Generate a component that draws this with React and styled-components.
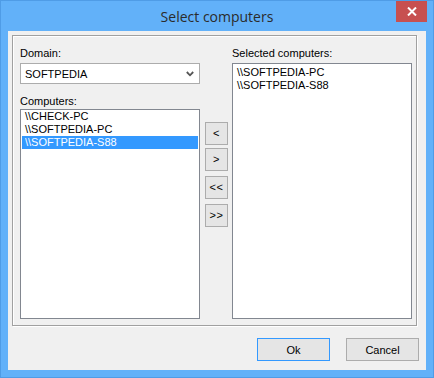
import React, { useState } from 'react';
import styled, { createGlobalStyle } from 'styled-components';

const GlobalStyle = createGlobalStyle`
  html, body {
    margin: 0;
    padding: 0;
    background: #ffffff;
  }
  * {
    box-sizing: border-box;
  }
`;

const Window = styled.div`
  width: 434px;
  height: 378px;
  background: #62b1f9;
  border: 1px solid #4f9ce6;
  padding: 0 7px 7px 7px;
  display: flex;
  flex-direction: column;
  position: relative;
  font-family: "Liberation Sans", Arial, sans-serif;
`;

const TitleBar = styled.div`
  height: 30px;
  display: flex;
  align-items: center;
  justify-content: center;
`;

const Title = styled.div`
  font-family: "Open Sans", "Noto Sans", sans-serif;
  font-size: 14px;
  color: #2b2b2b;
  margin-top: 1px;
`;

const CloseButton = styled.div`
  position: absolute;
  top: 0;
  right: 6px;
  width: 31px;
  height: 21px;
  background: #c75050;
  display: flex;
  align-items: center;
  justify-content: center;
`;

const Content = styled.div`
  flex: 1;
  background: #f0f0f0;
  padding: 4px 7px 0 4px;
  display: flex;
  flex-direction: column;
`;

const GroupBox = styled.div`
  width: 405px;
  height: 291px;
  border: 1px solid #a0a0a0;
  box-shadow: inset 1px 1px 0 #ffffff, 1px 1px 0 #ffffff;
  padding: 11px 0 0 7px;
  display: grid;
  grid-template-columns: 180px 32px 180px;
`;

const Column = styled.div`
  display: flex;
  flex-direction: column;
`;

const Label = styled.div`
  font-size: 11px;
  line-height: 13px;
  height: 13px;
  color: #000;
  margin-top: ${p => p.gap || 0}px;
`;

const Combo = styled.div`
  margin-top: 3px;
  height: 21px;
  background: #fff;
  border: 1px solid #acacac;
  display: flex;
  align-items: center;
  justify-content: space-between;
  padding: 0 5px 0 4px;
  font-size: 11px;
  color: #000;
`;

const ListBox = styled.div`
  margin-top: ${p => p.gap}px;
  height: ${p => p.h}px;
  background: #fff;
  border: 1px solid #828790;
  padding: ${p => p.padTop}px 1px 0 1px;
  display: flex;
  flex-direction: column;
`;

const ListItem = styled.div`
  height: 13px;
  line-height: 13px;
  font-size: 11px;
  padding-left: 3px;
  color: ${p => (p.selected ? '#fff' : '#000')};
  background: ${p => (p.selected ? '#3399ff' : 'transparent')};
  white-space: nowrap;
`;

const MoveColumn = styled.div`
  display: flex;
  flex-direction: column;
  align-items: flex-start;
  padding-left: 5px;
`;

const SmallButton = styled.button`
  width: 23px;
  height: 23px;
  margin-top: ${p => p.gap}px;
  padding: 0 0 1px 0;
  background: #e5e5e5;
  border: 1px solid #acacac;
  border-radius: 0;
  font-family: "Liberation Sans", Arial, sans-serif;
  font-size: 11px;
  color: #000;
  display: flex;
  align-items: center;
  justify-content: center;
  letter-spacing: 0.5px;
`;

const Footer = styled.div`
  margin-top: 12px;
  display: flex;
  justify-content: flex-end;
  gap: 16px;
`;

const DialogButton = styled.button`
  width: 73px;
  height: 23px;
  background: #e5e5e5;
  border: 1px solid ${p => (p.primary ? '#3399ff' : '#acacac')};
  border-radius: 0;
  font-family: "Liberation Sans", Arial, sans-serif;
  font-size: 11px;
  color: #000;
  padding: 0;
`;

const available = ['\\\\CHECK-PC', '\\\\SOFTPEDIA-PC', '\\\\SOFTPEDIA-S88'];
const chosen = ['\\\\SOFTPEDIA-PC', '\\\\SOFTPEDIA-S88'];

export default function App() {
  const [selected, setSelected] = useState(2);

  return (
    <>
      <GlobalStyle />
      <Window>
        <TitleBar>
          <Title>Select computers</Title>
        </TitleBar>
        <CloseButton>
          <svg width="10" height="9" viewBox="0 0 10 9">
            <path d="M1 0.5 L9 8.5 M9 0.5 L1 8.5" stroke="#fff" strokeWidth="2" />
          </svg>
        </CloseButton>
        <Content>
          <GroupBox>
            <Column>
              <Label>Domain:</Label>
              <Combo>
                <span>SOFTPEDIA</span>
                <svg width="8" height="6" viewBox="0 0 8 6">
                  <path d="M0.8 1 L4 4.3 L7.2 1" stroke="#555" strokeWidth="1.8" fill="none" />
                </svg>
              </Combo>
              <Label gap={11}>Computers:</Label>
              <ListBox gap={1} h={210} padTop={0}>
                {available.map((name, i) => (
                  <ListItem key={name} selected={i === selected} onClick={() => setSelected(i)}>
                    {name}
                  </ListItem>
                ))}
              </ListBox>
            </Column>
            <MoveColumn>
              <SmallButton gap={75}>&lt;</SmallButton>
              <SmallButton gap={3}>&gt;</SmallButton>
              <SmallButton gap={5}>&lt;&lt;</SmallButton>
              <SmallButton gap={5}>&gt;&gt;</SmallButton>
            </MoveColumn>
            <Column>
              <Label>Selected computers:</Label>
              <ListBox gap={3} h={256} padTop={2}>
                {chosen.map(name => (
                  <ListItem key={name}>{name}</ListItem>
                ))}
              </ListBox>
            </Column>
          </GroupBox>
          <Footer>
            <DialogButton primary>Ok</DialogButton>
            <DialogButton>Cancel</DialogButton>
          </Footer>
        </Content>
      </Window>
    </>
  );
}
